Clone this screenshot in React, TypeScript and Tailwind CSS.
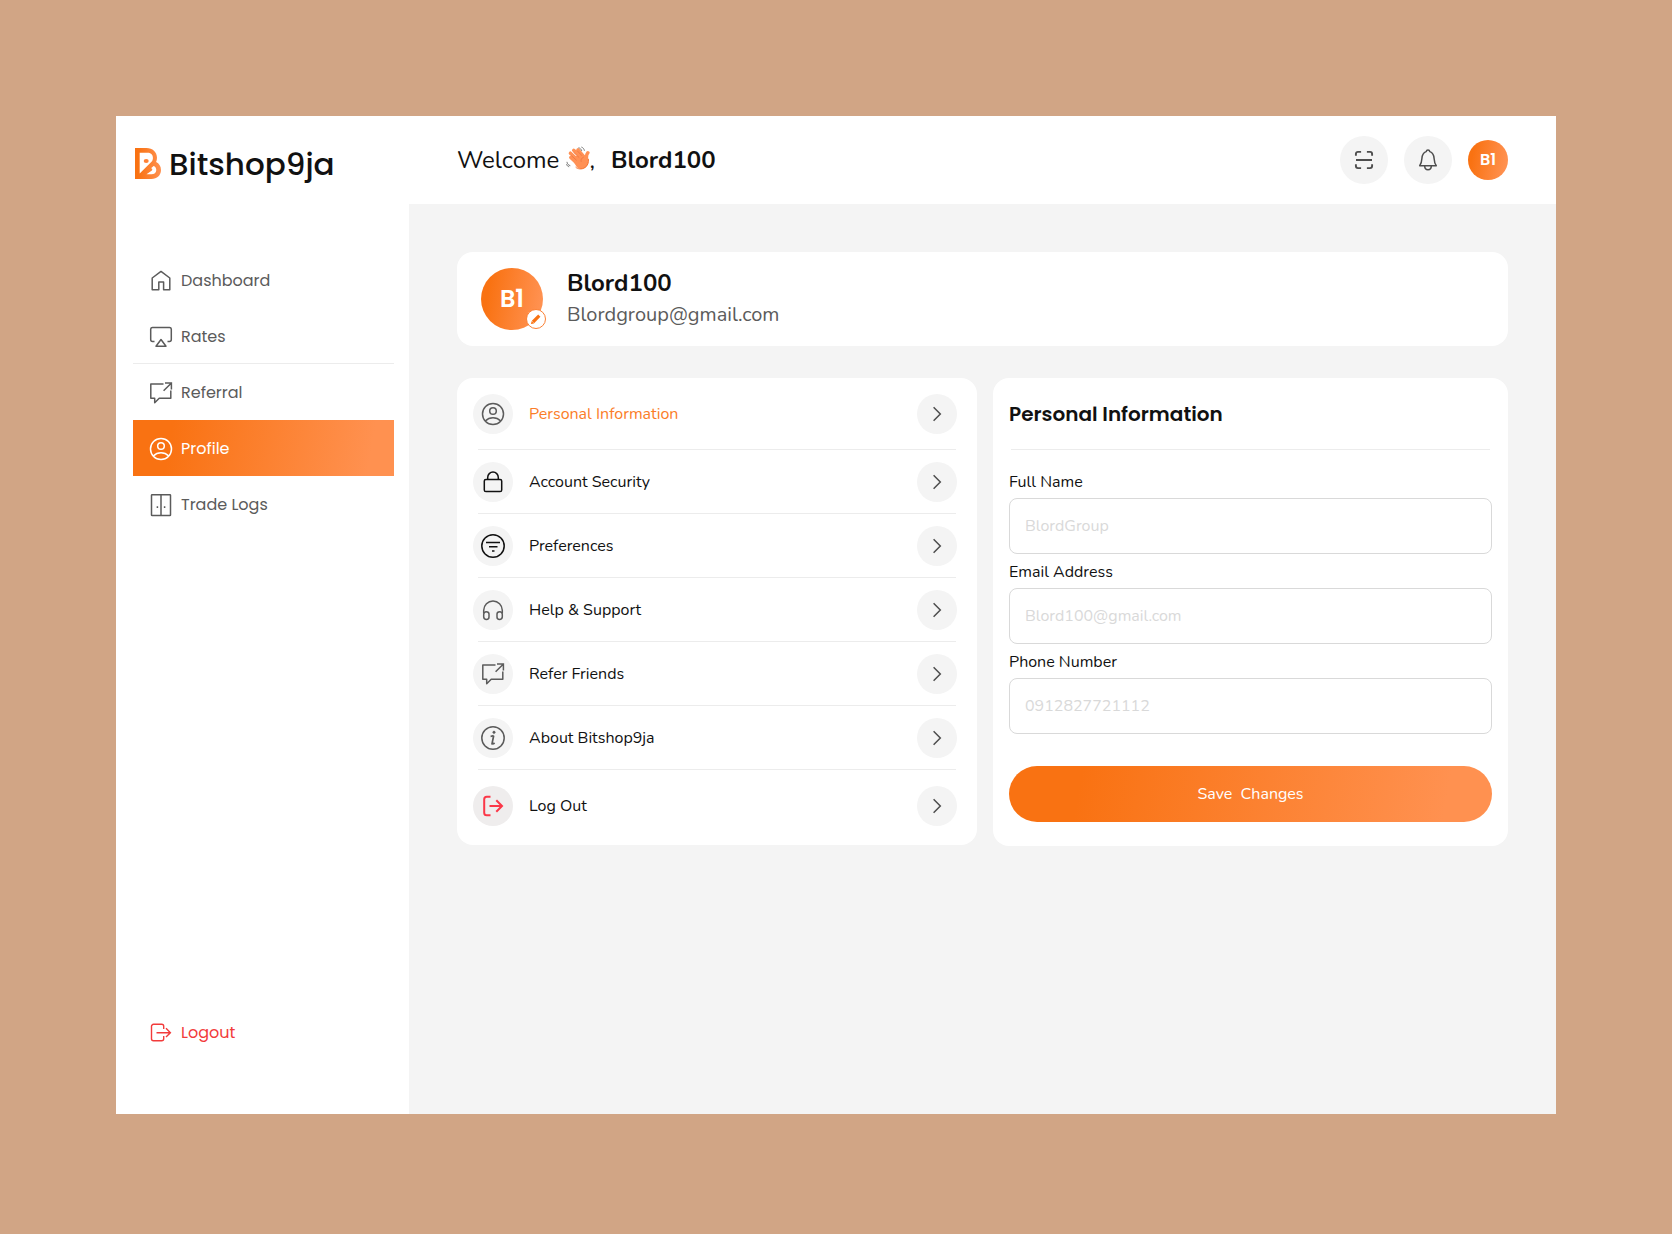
import type { ReactNode } from "react";

const gradient = "bg-linear-100/srgb from-[#f97212] from-15% to-[#ff9150] to-90%";

function Icon({ size = 24, width = 1.5, className = "", children }: { size?: number; width?: number; className?: string; children: ReactNode }) {
  return (
    <svg aria-hidden="true" width={size} height={size} viewBox="0 0 24 24" fill="none" stroke="currentColor" strokeWidth={width} className={"shrink-0 " + className}>
      {children}
    </svg>
  );
}

const HomeIcon = () => (
  <Icon>
    <path d="M3.200 9 12 2.400l8.800 6.600v11.800h-6.200v-7.800H9.800v7.800H3.200z" strokeLinejoin="round" />
  </Icon>
);
const RatesIcon = () => (
  <Icon>
    <path d="M5.500 16.500H3.600A2 2 0 0 1 1.700 14.500V4.200A1.800 1.800 0 0 1 3.500 2.600h17a1.800 1.800 0 0 1 1.800 1.600v10.300a2 2 0 0 1-1.900 2h-1.900" />
    <path d="m12 14.500 5 6.700H7z" strokeLinejoin="round" />
  </Icon>
);
const ReferralIcon = () => (
  <Icon>
    <path d="M14.500 2.900H1.800v14.400h3.900v4.400l4.500-4.400h11.600V9.600" strokeLinejoin="round" />
    <path d="M16 2h6.400v6.400M22.200 2.200 14.600 9.800" />
  </Icon>
);
const ProfileIcon = () => (
  <Icon>
    <circle cx="12" cy="12" r="10.500" />
    <circle cx="12" cy="9" r="3.300" />
    <path d="M4.300 19c2.200-2.200 4.900-3.200 7.700-3.200s5.500 1 7.700 3.200" />
  </Icon>
);
const DoorIcon = () => (
  <Icon>
    <rect x="2.500" y="1.700" width="19" height="20.800" rx="0.600" />
    <path d="M12 1.700v20.800M8.400 13.300v1.700M15.600 13.300v1.700" />
  </Icon>
);
const LogoutIcon = () => (
  <Icon width={1.4}>
    <path d="M14.700 8V5.300a2 2 0 0 0-2-2H4.500a2 2 0 0 0-2 2v12.400a2 2 0 0 0 2 2h8.200a2 2 0 0 0 2-2V15" />
    <path d="M7.500 11.700h13.700M17 7.300l4.400 4.400-4.400 4.400" />
  </Icon>
);
const ScanIcon = () => (
  <Icon width={1.9}>
    <path d="M3.900 7.800V5.900a2 2 0 0 1 2-2h3.200M14.900 3.900h3.200a2 2 0 0 1 2 2v1.900M20.100 16.200v1.900a2 2 0 0 1-2 2h-3.200M9.100 20.100H5.900a2 2 0 0 1-2-2v-1.900M4 12h16" />
  </Icon>
);
const BellIcon = () => (
  <Icon>
    <path d="M3.700 17.700h16.600c-1.700-2.100-2-4-2.200-7.200-.2-3.800-1.900-6.100-4.300-6.900-.2-1-.8-1.600-1.800-1.600s-1.600.6-1.800 1.600c-2.400.8-4.100 3.100-4.300 6.900-.2 3.200-.5 5.100-2.200 7.200z" strokeLinejoin="round" />
    <path d="M8.700 18c0 2.200 1.300 3.700 3.300 3.700s3.300-1.500 3.300-3.700" />
  </Icon>
);
const LockIcon = () => (
  <Icon>
    <rect x="3.300" y="9.500" width="17.400" height="12" rx="1.600" />
    <path d="M6.700 9.500V7.400a5.300 5.300 0 0 1 10.600 0v2.100" />
  </Icon>
);
const FilterIcon = () => (
  <Icon>
    <circle cx="12" cy="12" r="11.200" />
    <path d="M5 8.500h14M8 12.700h8.500M11 17h2.500" />
  </Icon>
);
const HeadphonesIcon = () => (
  <Icon>
    <path d="M2.700 15.500v-3.200a9.300 9.300 0 0 1 18.600 0v3.200" />
    <path d="M2.700 16.500c0-1.800 1-2.800 2.500-2.800S8 14.500 8 16v3c0 1.500-.8 2.400-2.400 2.400s-2.900-.9-2.900-2.600zM21.300 16.500c0-1.800-1-2.800-2.500-2.800S16 14.500 16 16v3c0 1.500.8 2.400 2.400 2.400s2.900-.9 2.900-2.600z" />
  </Icon>
);
const InfoIcon = () => (
  <Icon>
    <circle cx="12" cy="12" r="11.200" />
    <path d="m12.700 9.500-1.700 8.300c.8.200 1.700 0 2.600-.8M9.600 10.300c1.100-.1 2-.3 3.100-.8" strokeWidth={1.7} />
    <circle cx="13" cy="6.300" r="1.200" fill="currentColor" strokeWidth={0.5} />
  </Icon>
);
const ExitIcon = () => (
  <Icon width={2}>
    <path d="M9.500 2.800H5.700a2.500 2.500 0 0 0-2.500 2.500v13.400a2.500 2.500 0 0 0 2.500 2.500h3.800" />
    <path d="M8.500 12h12.500M15.300 6.300 21 12l-5.700 5.700" />
  </Icon>
);
const ChevronIcon = () => (
  <Icon>
    <path d="m8.600 5.300 6.700 6.700-6.700 6.700" />
  </Icon>
);

function LogoMark() {
  return (
    <svg aria-hidden="true" width="26" height="32" viewBox="0 0 26 32" className="shrink-0">
      <defs>
        <linearGradient id="mark" x1="0" y1="0.5" x2="1" y2="0.5">
          <stop offset="0.1" stopColor="#f97212" />
          <stop offset="1" stopColor="#ff9150" />
        </linearGradient>
      </defs>
      <path
        fill="url(#mark)"
        fillRule="evenodd"
        d="M0 0h11.500C17.500 0 22 4 22 9.800c0 1.600-.3 3-.9 4.300 3 1.400 4.900 4.300 4.900 7.900 0 5.200-4 9-9.500 9H0zM4.700 4.800v20.600L17 13.200c.7-1 .9-2.200.9-3.500 0-3-2.300-4.900-5.400-4.900zM11.500 26.300h4.800c3 0 5-1.900 5-4.400 0-1.900-1-3.400-2.700-4l-2.600 2.400c1.300.1 1.700 1.300.9 2.200z"
      />
      <ellipse cx="11.200" cy="13" rx="2.500" ry="2" fill="#ff8135" />
    </svg>
  );
}

function WavingHand() {
  return (
    <svg role="img" aria-label="Waving hand" width="24" height="24" viewBox="0 0 25 24" className="mb-1 shrink-0">
      <g stroke="#ff9155" strokeLinecap="round" strokeWidth="3.600" fill="none">
        <path d="M5 11.500 12 18M4.600 7l8.900 8.500M8 4l9 8.500M12.500 3.500l6 7" />
        <path d="M22.800 6.500c-1.300 1.500-1.800 3-1.500 6.500" />
      </g>
      <path d="m6 12.500 10.500-6 3.200 4.200 3.300 1c.6 4.200.2 7.800-2.800 10.200-2.800 2.200-6.700 1.800-9.200-.7z" fill="#ff9155" />
      <path d="M18.500 11c-2.500 1-3.300 2.900-2.600 5M5.500 9.400l5.600 5.100M7.800 6l6 5.600M11.700 4.500l5 5.200" stroke="#ee7440" strokeWidth="0.800" fill="none" />
      <path d="M10 21.500c2 2 6.500 2.800 10 .3 2.600-1.900 3.800-5 3.300-8.800" stroke="#f4702a" strokeWidth="1" fill="none" />
      <path d="M13 1.300c1.700.3 3 1.700 3.400 3.300M16 .6c1.700.5 2.900 2 3.200 3.800M1 16c.1 2 1.400 3.500 3.500 4M.5 18.500c.4 1.300 1.400 2.300 2.800 2.700" stroke="#666" strokeWidth="0.900" fill="none" />
    </svg>
  );
}

const nav = [
  { label: "Dashboard", icon: <HomeIcon />, style: "text-[#5b5b5b]" },
  { label: "Rates", icon: <RatesIcon />, style: "border-b border-[#ececec] text-[#5b5b5b]" },
  { label: "Referral", icon: <ReferralIcon />, style: "text-[#5b5b5b]" },
  { label: "Profile", icon: <ProfileIcon />, style: gradient + " text-white", current: true },
  { label: "Trade Logs", icon: <DoorIcon />, style: "text-[#5b5b5b]" },
];

const settings = [
  { label: "Personal Information", icon: <ProfileIcon />, text: "text-[#fb7d28]", tone: "text-[#5b5b5b] bg-[#f4f4f4]", row: "pb-[15px]" },
  { label: "Account Security", icon: <LockIcon />, text: "", tone: "bg-[#f4f4f4]", row: "pt-3 pb-[11px]" },
  { label: "Preferences", icon: <FilterIcon />, text: "", tone: "bg-[#f4f4f4]", row: "pt-3 pb-[11px]" },
  { label: "Help & Support", icon: <HeadphonesIcon />, text: "", tone: "text-[#5b5b5b] bg-[#f4f4f4]", row: "pt-3 pb-[11px]" },
  { label: "Refer Friends", icon: <ReferralIcon />, text: "", tone: "text-[#5b5b5b] bg-[#f4f4f4]", row: "pt-3 pb-[11px]" },
  { label: "About Bitshop9ja", icon: <InfoIcon />, text: "", tone: "text-[#5b5b5b] bg-[#f4f4f4]", row: "pt-3 pb-[11px]" },
  { label: "Log Out", icon: <ExitIcon />, text: "", tone: "bg-[#efeded] text-[#fb3748]", row: "pt-4" },
];

const fields = [
  { id: "name", label: "Full Name", type: "text", placeholder: "BlordGroup" },
  { id: "email", label: "Email Address", type: "email", placeholder: "Blord100@gmail.com" },
  { id: "phone", label: "Phone Number", type: "tel", placeholder: "0912827721112" },
];

function Sidebar() {
  return (
    <aside className="flex w-[293px] shrink-0 flex-col bg-white pr-[15px] pl-[17px] font-['Poppins','Inter',sans-serif]">
      <a href="#" className="flex items-center gap-2 pt-6 pl-0.5 text-[31px] leading-12 font-medium">
        <LogoMark />
        Bitshop9ja
      </a>
      <nav className="mt-16 flex flex-1 flex-col">
        {nav.map((item) => (
          <a key={item.label} href="#" aria-current={item.current ? "page" : undefined} className={"flex h-14 items-center gap-2 px-4 pt-0.5 text-base " + item.style}>
            {item.icon}
            {item.label}
          </a>
        ))}
      </nav>
      <button type="button" className="mb-[54px] flex h-14 items-center gap-2 px-4 pt-0.5 text-base text-[#f23b3b]">
        <LogoutIcon />
        Logout
      </button>
    </aside>
  );
}

function Header() {
  return (
    <header className="flex h-22 items-center bg-white px-12">
      <h1 className="flex items-center text-2xl">
        Welcome&nbsp;
        <WavingHand />
        ,<strong className="ml-4 font-bold">Blord100</strong>
      </h1>
      <div className="ml-auto flex items-center gap-4 text-[#4d4d4d]">
        <button type="button" aria-label="Scan" className="grid size-12 place-items-center rounded-full bg-[#f4f4f4]">
          <ScanIcon />
        </button>
        <button type="button" aria-label="Notifications" className="grid size-12 place-items-center rounded-full bg-[#f4f4f4]">
          <BellIcon />
        </button>
        <button type="button" className={"grid size-10 place-items-center rounded-full font-['Poppins','Inter',sans-serif] text-base font-semibold text-white " + gradient}>
          B1
        </button>
      </div>
    </header>
  );
}

function ProfileCard() {
  return (
    <section className="flex items-center gap-6 rounded-2xl bg-white px-6 py-[15px]">
      <div className={"relative grid size-[62px] place-items-center rounded-full font-['Poppins','Inter',sans-serif] text-2xl font-semibold text-white " + gradient}>
        B1
        <button type="button" aria-label="Edit picture" className="absolute -right-[3px] bottom-px grid size-5 place-items-center rounded-full border border-[#fb8033] bg-white">
          <svg aria-hidden="true" width="12" height="12" viewBox="0 0 12 12">
            <path d="M3 9 9.300 2.700" stroke="#f97212" strokeWidth="3.200" strokeLinejoin="round" />
            <path d="M.9 11.100 1.700 8l2.400 2.400z" fill="#f97212" />
          </svg>
        </button>
      </div>
      <div>
        <h2 className="text-2xl leading-8 font-bold">Blord100</h2>
        <p className="text-xl leading-8 text-[#5b5b5b]">Blordgroup@gmail.com</p>
      </div>
    </section>
  );
}

function SettingsList() {
  return (
    <ul className="w-[520px] shrink-0 rounded-2xl bg-white px-4 pt-4 pb-[19px]">
      {settings.map((item, i) => (
        <li key={item.label}>
          <button type="button" className={"flex w-full items-center gap-4 pr-1 text-left " + item.row}>
            <span className={"grid size-10 place-items-center rounded-full " + item.tone}>{item.icon}</span>
            <span className={"flex-1 " + item.text}>{item.label}</span>
            <span className="grid size-10 place-items-center rounded-full bg-[#f4f4f4] text-[#4d4d4d]">
              <ChevronIcon />
            </span>
          </button>
          {i < settings.length - 1 && <hr className="mx-[5px] border-[#ececec]" />}
        </li>
      ))}
    </ul>
  );
}

function DetailsForm() {
  return (
    <form className="flex-1 rounded-2xl bg-white px-4 pb-6" onSubmit={(e) => e.preventDefault()}>
      <h2 className="pt-5 pb-[19px] font-['Poppins','Inter',sans-serif] text-xl leading-8 font-semibold">Personal Information</h2>
      <hr className="mx-0.5 mb-5 border-[#ececec]" />
      <div className="flex flex-col gap-1.5">
        {fields.map((field) => (
          <div key={field.id} className="flex flex-col gap-1">
            <label htmlFor={field.id} className="leading-6">
              {field.label}
            </label>
            <input id={field.id} type={field.type} placeholder={field.placeholder} className="h-14 rounded-lg border border-[#d9d9d9] px-[15px] placeholder:text-[#d9d9d9]" />
          </div>
        ))}
      </div>
      <button type="submit" className={"mt-8 h-14 w-full rounded-full text-white " + gradient}>
        Save&nbsp; Changes
      </button>
    </form>
  );
}

export default function App() {
  return (
    <div className="flex min-h-screen bg-[#d1a585] px-[116px] pt-[116px] pb-[120px] font-['Nunito','Lato',sans-serif] text-base text-[#111]">
      <div className="flex flex-1">
        <Sidebar />
        <div className="flex flex-1 flex-col">
          <Header />
          <main className="flex flex-1 flex-col gap-8 bg-[#f4f4f4] p-12">
            <ProfileCard />
            <div className="flex items-start gap-4">
              <SettingsList />
              <DetailsForm />
            </div>
          </main>
        </div>
      </div>
    </div>
  );
}
